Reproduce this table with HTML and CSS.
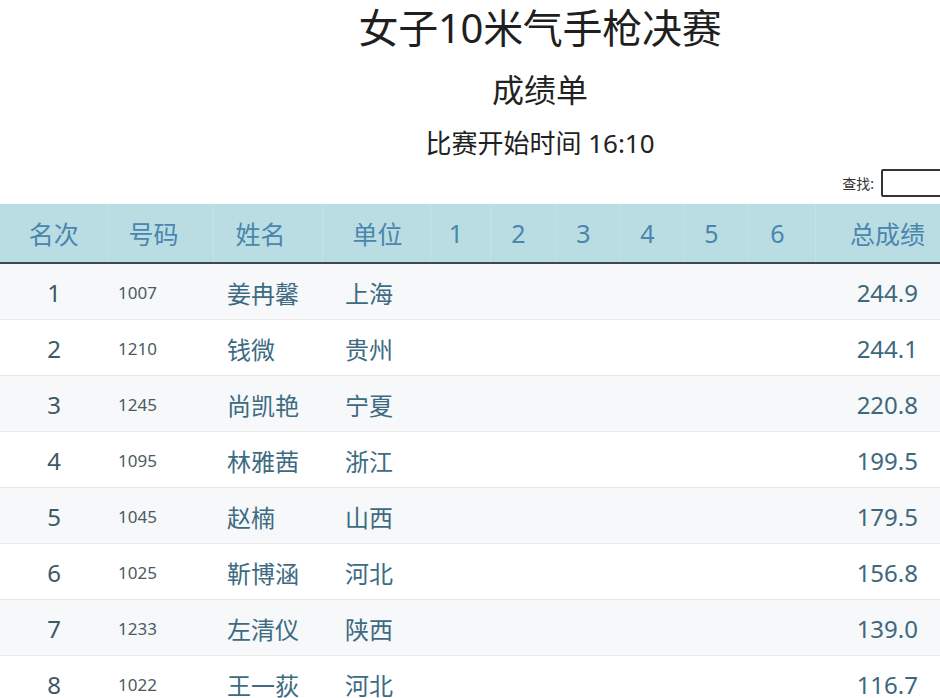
FILE: index.html
```html
<!DOCTYPE html>
<html lang="zh">
<head>
<meta charset="utf-8">
<title>女子10米气手枪决赛 成绩单</title>
<link rel="stylesheet" href="styles.css">
</head>
<body>
<div class="page">
  <h1 class="title">女子10米气手枪决赛</h1>
  <h2 class="subtitle">成绩单</h2>
  <p class="start">比赛开始时间 16:10</p>
  <div class="search">
    <label class="search-label">查找:</label>
    <input class="search-input" type="text">
  </div>
  <table class="results">
    <colgroup>
      <col class="c-rank"><col class="c-num"><col class="c-name"><col class="c-unit">
      <col class="c-s1"><col class="c-s2"><col class="c-s3"><col class="c-s4"><col class="c-s5"><col class="c-s6">
      <col class="c-total">
    </colgroup>
    <thead>
      <tr>
        <th class="h-center">名次</th>
        <th class="h-center h-num">号码</th>
        <th class="h-name">姓名</th>
        <th class="h-unit">单位</th>
        <th class="h-center h-shot">1</th>
        <th class="h-center h-shot">2</th>
        <th class="h-center h-shot">3</th>
        <th class="h-center h-shot">4</th>
        <th class="h-center h-shot">5</th>
        <th class="h-center h-shot">6</th>
        <th class="h-total">总成绩</th>
      </tr>
    </thead>
    <tbody>
      <tr><td class="rank">1</td><td class="num">1007</td><td class="name">姜冉馨</td><td class="unit">上海</td><td></td><td></td><td></td><td></td><td></td><td></td><td class="total">244.9</td></tr>
      <tr><td class="rank">2</td><td class="num">1210</td><td class="name">钱微</td><td class="unit">贵州</td><td></td><td></td><td></td><td></td><td></td><td></td><td class="total">244.1</td></tr>
      <tr><td class="rank">3</td><td class="num">1245</td><td class="name">尚凯艳</td><td class="unit">宁夏</td><td></td><td></td><td></td><td></td><td></td><td></td><td class="total">220.8</td></tr>
      <tr><td class="rank">4</td><td class="num">1095</td><td class="name">林雅茜</td><td class="unit">浙江</td><td></td><td></td><td></td><td></td><td></td><td></td><td class="total">199.5</td></tr>
      <tr><td class="rank">5</td><td class="num">1045</td><td class="name">赵楠</td><td class="unit">山西</td><td></td><td></td><td></td><td></td><td></td><td></td><td class="total">179.5</td></tr>
      <tr><td class="rank">6</td><td class="num">1025</td><td class="name">靳博涵</td><td class="unit">河北</td><td></td><td></td><td></td><td></td><td></td><td></td><td class="total">156.8</td></tr>
      <tr><td class="rank">7</td><td class="num">1233</td><td class="name">左清仪</td><td class="unit">陕西</td><td></td><td></td><td></td><td></td><td></td><td></td><td class="total">139.0</td></tr>
      <tr><td class="rank">8</td><td class="num">1022</td><td class="name">王一荻</td><td class="unit">河北</td><td></td><td></td><td></td><td></td><td></td><td></td><td class="total">116.7</td></tr>
    </tbody>
  </table>
</div>
</body>
</html>
```
FILE: styles.css
```css
html, body {
  margin: 0;
  padding: 0;
  background: #ffffff;
  overflow: hidden;
}
body {
  font-family: "Noto Sans", "Noto Sans CJK SC", sans-serif;
  color: #222;
}
.page {
  width: 1080px;
  text-align: center;
}
.title {
  margin: 0;
  padding-top: 4px;
  font-size: 40px;
  line-height: 48px;
  font-weight: 400;
  color: #1f1f1f;
  letter-spacing: -0.3px;
}
.subtitle {
  margin: 18px 0 0;
  font-size: 32px;
  line-height: 40px;
  font-weight: 400;
  color: #222;
}
.start {
  margin: 16px 0 0;
  font-size: 26px;
  line-height: 34px;
  color: #222;
}
.search {
  display: flex;
  justify-content: flex-end;
  align-items: center;
  gap: 7px;
  padding-right: 20px;
  margin-top: 9px;
  height: 28px;
}
.search-label {
  font-size: 14px;
  color: #333;
}
.search-input {
  box-sizing: border-box;
  width: 179px;
  height: 28px;
  margin: 0;
  border: 2px solid #333;
  border-radius: 2px;
  background: #fff;
}
.results {
  margin-top: 7px;
  width: 940px;
  border-collapse: collapse;
  table-layout: fixed;
}
.c-rank { width: 108px; }
.c-num { width: 105px; }
.c-name { width: 109px; }
.c-unit { width: 108px; }
.c-s1 { width: 60px; }
.c-s2 { width: 65px; }
.c-s3 { width: 65px; }
.c-s4 { width: 63px; }
.c-s5 { width: 65px; }
.c-s6 { width: 67px; }
.c-total { width: 125px; }
.results thead th {
  height: 58px;
  padding: 0;
  background: #b9dde3;
  color: #4a86ad;
  font-size: 25px;
  font-weight: 400;
  border-left: 1px solid #c3e3e8;
  border-bottom: 2px solid #3c4a52;
}
.results thead th:first-child {
  border-left: none;
}
.h-center { text-align: center; }
.h-num { padding-right: 14px !important; }
.h-shot { padding-right: 8px !important; }
.h-name { text-align: left; padding-left: 22px !important; }
.h-unit { text-align: left; padding-left: 30px !important; }
.h-total { text-align: right; padding-right: 15px !important; }
.results tbody td {
  height: 53px;
  padding: 2px 0 0;
  border-bottom: 1px solid #e6e8ea;
  font-size: 24px;
}
.results tbody tr:nth-child(odd) td {
  background: #f7f8f9;
}
.results tbody tr:nth-child(even) td {
  background: #ffffff;
}
.rank {
  text-align: center;
  color: #3e5966;
}
.num {
  text-align: left;
  padding-left: 10px !important;
  font-size: 17px !important;
  color: #4c5b62;
}
.name {
  text-align: left;
  padding-left: 14px !important;
  color: #3d6b82;
}
.unit {
  text-align: left;
  padding-left: 23px !important;
  color: #3d6b82;
}
.total {
  text-align: right;
  padding-right: 22px !important;
  color: #3d687e;
}
```
